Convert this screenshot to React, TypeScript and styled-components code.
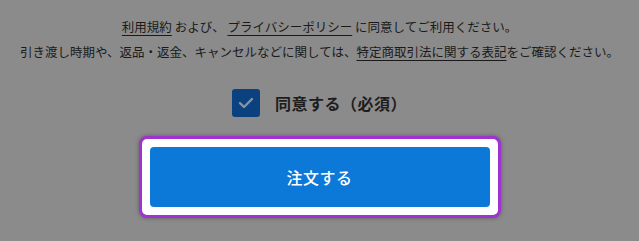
import styled, { createGlobalStyle } from "styled-components";

const GlobalStyle = createGlobalStyle`
	html, body {
		margin: 0;
		padding: 0;
		background: #8b8b8b;
	}
	body {
		font-family: "Noto Sans CJK JP", "Noto Sans", sans-serif;
	}
`;

const Page = styled.div`
	width: 639px;
	height: 241px;
	display: flex;
	flex-direction: column;
	align-items: center;
	padding-top: 14px;
	box-sizing: border-box;
	overflow: hidden;
`;

const Notice = styled.p`
	margin: 0;
	font-size: 12.5px;
	line-height: 25px;
	color: #1a1a1a;
	text-align: center;
	white-space: nowrap;
`;

const TextLink = styled.a`
	color: #1a1a1a;
	text-decoration: underline;
	text-underline-offset: 3px;
	cursor: pointer;
`;

const AgreeRow = styled.label`
	display: flex;
	align-items: center;
	gap: 15px;
	margin-top: 25px;
	cursor: pointer;
`;

const CheckBox = styled.span<{ checked: boolean }>`
	width: 28px;
	height: 28px;
	border-radius: 3px;
	background: ${(p) => (p.checked ? "#0b417f" : "#8b8b8b")};
	display: flex;
	align-items: center;
	justify-content: center;
`;

const AgreeText = styled.span`
	font-size: 16px;
	font-weight: 700;
	color: #1e1e1e;
	letter-spacing: 0.5px;
`;

const Spotlight = styled.div`
	margin-top: 19px;
	padding: 8px;
	border: 3px solid #a031d3;
	border-radius: 8px;
	background: #ffffff;
	box-shadow: 0 0 4px rgba(0, 0, 0, 0.35);
`;

const OrderButton = styled.button`
	width: 340px;
	height: 60px;
	border: none;
	border-radius: 4px;
	background: #0c78d8;
	color: #ffffff;
	font-family: "Noto Sans CJK JP", "Noto Sans", sans-serif;
	font-size: 16px;
	font-weight: 500;
	letter-spacing: 0.5px;
	display: block;
	cursor: pointer;
`;

function App() {
	return (
		<>
			<GlobalStyle />
			<Page>
				<Notice>
					<TextLink>利用規約</TextLink> および、 <TextLink>プライバシーポリシー</TextLink> に同意してご利用ください。
				</Notice>
				<Notice>
					引き渡し時期や、返品・返金、キャンセルなどに関しては、<TextLink>特定商取引法に関する表記</TextLink>をご確認ください。
				</Notice>
				<AgreeRow>
					<CheckBox checked={true}>
						<svg width="16" height="12" viewBox="0 0 16 12" fill="none">
							<path d="M2 6.2 L6 10 L14 2" stroke="#8594a6" strokeWidth="2.4" strokeLinecap="round" strokeLinejoin="round" />
						</svg>
					</CheckBox>
					<AgreeText>同意する（必須）</AgreeText>
				</AgreeRow>
				<Spotlight>
					<OrderButton>注文する</OrderButton>
				</Spotlight>
			</Page>
		</>
	);
}

export default App;
